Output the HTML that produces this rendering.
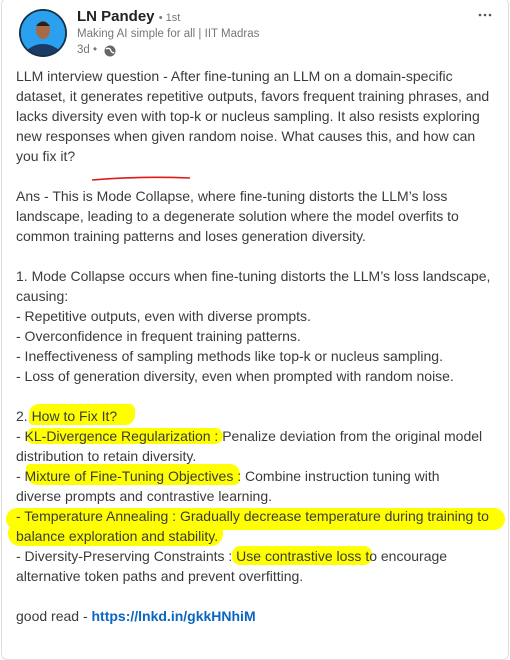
<!DOCTYPE html>
<html><head><meta charset="utf-8"><style>
body{margin:0;width:510px;height:648px;background:#fff;position:relative;overflow:hidden;font-family:"Liberation Sans",sans-serif}
.card{position:absolute;left:1px;top:-2px;width:506px;height:660px;border:1px solid #dedede;border-radius:6px}
.l{position:absolute;left:16px;white-space:nowrap;font-size:14px;line-height:20px;color:#3b3b3b}
.hl{position:absolute;background:#ffff00;border-radius:8px}
</style></head><body>
<div class="card"></div>
<div class="hl" style="left:29px;top:404px;width:106px;height:21px;border-radius:10px 6px 10px 4px"></div>
<div class="hl" style="left:26px;top:428px;width:197px;height:16px"></div>
<div class="hl" style="left:26px;top:464px;width:214px;height:21px;border-radius:4px 10px 6px 12px"></div>
<div class="hl" style="left:6px;top:508px;width:499px;height:22px;border-radius:12px"></div>
<div class="hl" style="left:8px;top:526px;width:215px;height:20px;border-radius:6px 6px 12px 12px"></div>
<div class="hl" style="left:232px;top:546px;width:140px;height:19px;border-radius:8px"></div>
<svg style="position:absolute;left:0;top:0" width="510" height="200">
<path d="M92 180 Q140 176 190 178" stroke="#e0191a" stroke-width="1.6" fill="none"/>
<defs><clipPath id="c"><circle cx="43" cy="33" r="23"/></clipPath></defs>
<circle cx="43" cy="33" r="24" fill="#1a3d66"/>
<g clip-path="url(#c)">
<rect x="19" y="9" width="48" height="48" fill="#1f8fe0"/>
<circle cx="43" cy="33" r="22" fill="#2aa0ef"/>
<ellipse cx="43" cy="60" rx="20" ry="16" fill="#1c3a66"/>
<ellipse cx="43" cy="30" rx="7" ry="9" fill="#a66a48"/>
<path d="M36 26 Q43 17 50 26" fill="#222"/>
</g>
<circle cx="43" cy="33" r="23" fill="none" stroke="#183040" stroke-width="1.5"/>
<circle cx="110" cy="51" r="5.5" fill="#666"/>
<path d="M106 49 Q110 47 111 51 Q113 54 114 52" stroke="#fff" stroke-width="1.3" fill="none"/>
<circle cx="480" cy="15" r="1.3" fill="#555"/><circle cx="485" cy="15" r="1.3" fill="#555"/><circle cx="490" cy="15" r="1.3" fill="#555"/>
</svg>
<div style="position:absolute;left:77px;top:8px;font-size:15px;font-weight:bold;color:#222">LN Pandey <span style="font-size:11px;font-weight:normal;color:#777">• 1st</span></div>
<div style="position:absolute;left:77px;top:28px;font-size:11.5px;color:#777">Making AI simple for all | IIT Madras</div>
<div style="position:absolute;left:77px;top:44px;font-size:11.5px;color:#777">3d •</div>
<div class="l" style="top:66px">LLM interview question - After fine-tuning an LLM on a domain-specific</div>
<div class="l" style="top:86px">dataset, it generates repetitive outputs, favors frequent training phrases, and</div>
<div class="l" style="top:106px">lacks diversity even with top-k or nucleus sampling. It also resists exploring</div>
<div class="l" style="top:126px">new responses when given random noise. What causes this, and how can</div>
<div class="l" style="top:146px">you fix it?</div>
<div class="l" style="top:186px">Ans - This is Mode Collapse, where fine-tuning distorts the LLM’s loss</div>
<div class="l" style="top:206px">landscape, leading to a degenerate solution where the model overfits to</div>
<div class="l" style="top:226px">common training patterns and loses generation diversity.</div>
<div class="l" style="top:266px">1. Mode Collapse occurs when fine-tuning distorts the LLM’s loss landscape,</div>
<div class="l" style="top:286px">causing:</div>
<div class="l" style="top:306px">- Repetitive outputs, even with diverse prompts.</div>
<div class="l" style="top:326px">- Overconfidence in frequent training patterns.</div>
<div class="l" style="top:346px">- Ineffectiveness of sampling methods like top-k or nucleus sampling.</div>
<div class="l" style="top:366px">- Loss of generation diversity, even when prompted with random noise.</div>
<div class="l" style="top:406px">2. How to Fix It?</div>
<div class="l" style="top:426px">- KL-Divergence Regularization : Penalize deviation from the original model</div>
<div class="l" style="top:446px">distribution to retain diversity.</div>
<div class="l" style="top:466px">- Mixture of Fine-Tuning Objectives : Combine instruction tuning with</div>
<div class="l" style="top:486px">diverse prompts and contrastive learning.</div>
<div class="l" style="top:506px">- Temperature Annealing : Gradually decrease temperature during training to</div>
<div class="l" style="top:526px">balance exploration and stability.</div>
<div class="l" style="top:546px">- Diversity-Preserving Constraints : Use contrastive loss to encourage</div>
<div class="l" style="top:566px">alternative token paths and prevent overfitting.</div>
<div class="l" style="top:606px">good read - <span style="color:#0a66c2;font-weight:bold">https://lnkd.in/gkkHNhiM</span></div>
</body></html>
